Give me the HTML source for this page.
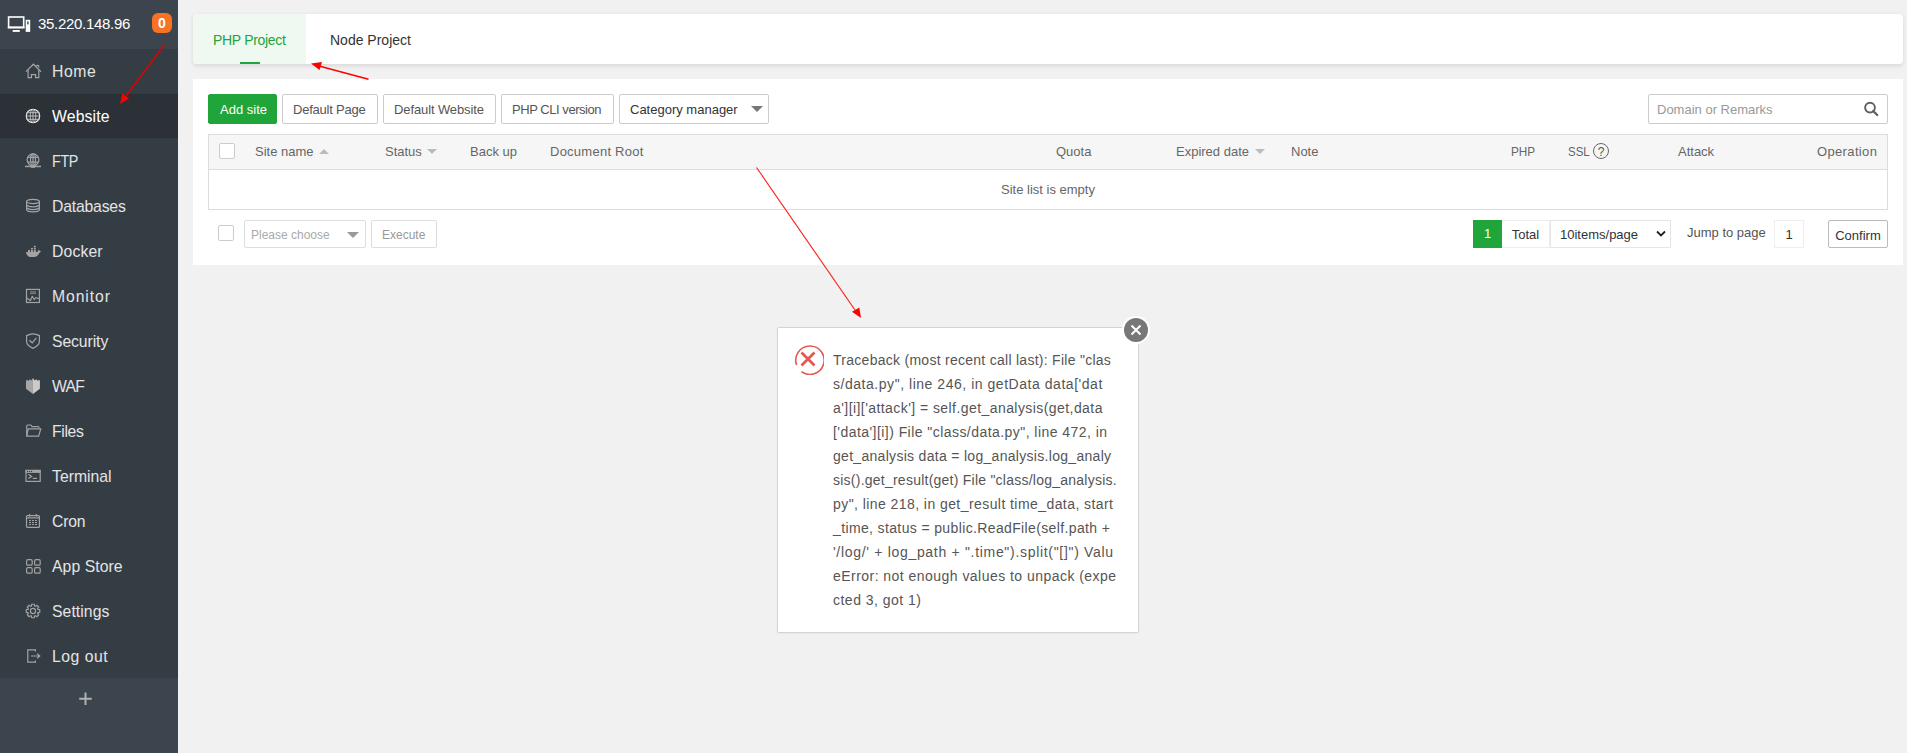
<!DOCTYPE html>
<html><head><meta charset="utf-8">
<style>
*{margin:0;padding:0;box-sizing:border-box}
html,body{width:1907px;height:753px;overflow:hidden;background:#f1f1f1;font-family:"Liberation Sans",sans-serif;position:relative}
.abs{position:absolute}
#side{position:absolute;left:0;top:0;width:178px;height:753px;background:#3c444d}
#side .ip{position:absolute;left:38px;top:15px;font-size:15px;color:#fff;letter-spacing:-0.3px;line-height:18px}
#side .badge{position:absolute;left:152px;top:13px;width:20px;height:20px;border-radius:6px;background:#f97224;color:#fff;font-size:14px;font-weight:bold;text-align:center;line-height:21px}
#menu{position:absolute;left:0;top:49px;width:178px;height:630px;background:#353d44}
#menu .it{position:absolute;left:0;width:178px;height:45px}
#menu .it.cur{background:#2c3138}
#menu .it span{position:absolute;left:52px;top:13.5px;font-size:15.75px;line-height:18px;color:#e4e4e4}
#menu .it.cur span{color:#fff}
#menu .it svg{position:absolute;left:25px;top:14px;width:18px;height:18px;overflow:visible}
#menu svg .s{fill:none;stroke:#a3a3a3;stroke-width:1.2}
#menu svg .f{fill:#a3a3a3}
#addm{position:absolute;left:0;top:678px;width:178px;height:74px;background:#3c444d}
.card{position:absolute;background:#fff}
.t13{font-size:13px;line-height:15px;white-space:nowrap}
.btn{position:absolute;top:94px;height:30px;border:1px solid #ccc;border-radius:2px;background:#fff;color:#555;font-size:13px;line-height:30px;white-space:nowrap;padding-left:10px}
.th{position:absolute;top:144px;font-size:13px;line-height:15px;color:#666;white-space:nowrap}
.chk{position:absolute;width:16px;height:16px;border:1px solid #ccc;border-radius:2px;background:#fff}
.tri-d{position:absolute;width:0;height:0;border-left:5px solid transparent;border-right:5px solid transparent;border-top:5px solid #bbb}
.tri-u{position:absolute;width:0;height:0;border-left:5px solid transparent;border-right:5px solid transparent;border-bottom:5px solid #bbb}
.dl{position:absolute;left:55px;font-size:14px;line-height:24px;color:#555;white-space:nowrap}
</style></head><body>
<div id="side">
  <svg class="abs" style="left:7px;top:15px" width="24" height="18" viewBox="0 0 24 18"><rect x="1.6" y="2" width="15.1" height="10.4" fill="none" stroke="#fff" stroke-width="1.6"/><rect x="0.8" y="11.6" width="16.7" height="1.8" fill="#fff"/><rect x="5.7" y="15" width="7.1" height="1.9" fill="#fff"/><rect x="18.7" y="4.8" width="4.5" height="12.1" fill="#fff"/><rect x="20.2" y="6.4" width="1.4" height="3" fill="#3c444d"/></svg>
  <div class="ip">35.220.148.96</div>
  <div class="badge">0</div>
  <div id="menu">
    <div class="it" style="top:0"><svg viewBox="0 0 18 18"><path class="s" stroke-width="1.1" d="M0.9 8.6 L8.45 1.2 L16 8.7"/><path class="s" stroke-width="1.1" d="M3.1 7 V14.6 H6.4 V11.6 H10.6 V14.6 H13.8 V7"/><path class="s" stroke-width="1" d="M11.4 2.9 a1.3 1.3 0 1 1 2.2 1.6"/></svg><span style="letter-spacing:0.55px">Home</span></div>
    <div class="it cur" style="top:45px;height:44px"><svg viewBox="0 0 18 18"><circle cx="8" cy="8" r="6.7" fill="none" stroke="#e6e6e6" stroke-width="1.2"/><ellipse cx="8" cy="8" rx="2.8" ry="6.7" fill="none" stroke="#c8c8c8" stroke-width="0.9"/><path fill="none" stroke="#c8c8c8" stroke-width="0.9" d="M8 1.3 V14.7 M1.6 4.7 H14.4 M1.3 8 H14.7 M1.6 11.3 H14.4"/></svg><span style="letter-spacing:0.15px">Website</span></div>
    <div class="it" style="top:90px"><svg viewBox="0 0 18 18"><circle class="s" cx="8" cy="6.8" r="5.9" stroke-width="1.1"/><ellipse class="s" cx="8" cy="6.8" rx="2.5" ry="5.9" stroke-width="1"/><path class="s" d="M8 1 V12.6 M2.6 4.4 H13.4 M2.6 9.2 H13.4" stroke-width="1"/><rect class="f" x="0" y="12.7" width="16" height="1.5"/><rect class="f" x="6" y="12" width="4" height="2.8"/></svg><span style="letter-spacing:-0.4px;transform:scaleX(0.91);transform-origin:0 0">FTP</span></div>
    <div class="it" style="top:135px"><svg viewBox="0 0 18 18"><path class="s" d="M1.6 3.5 C1.6 0.6 14.4 0.6 14.4 3.5 V11.5 C14.4 14.6 1.6 14.6 1.6 11.5 Z"/><path class="s" d="M1.6 3.5 C1.6 6.2 14.4 6.2 14.4 3.5 M2.2 7 C3 9.4 13 9.4 13.8 7 M2.2 9.8 C3 12.2 13 12.2 13.8 9.8"/></svg><span style="letter-spacing:-0.19px">Databases</span></div>
    <div class="it" style="top:180px"><svg viewBox="0 0 18 18"><path class="f" d="M1 9.1 H12.4 L13.1 7.7 L13.9 6.5 L14.6 7.7 L16.1 8.4 L14.7 9.5 C13.5 11.8 11.6 14 9 14 H4.6 C2.6 13.2 1.3 11.6 1 9.1 Z"/><rect class="f" x="3" y="7" width="2" height="2.2"/><rect class="f" x="5.9" y="7" width="2" height="2.2"/><rect class="f" x="8.8" y="7" width="2" height="2.2"/><rect class="f" x="5.9" y="4.9" width="2" height="1.5"/><rect class="f" x="8.8" y="4.9" width="2" height="1.5"/><rect class="f" x="8.8" y="2.8" width="2" height="1.5"/></svg><span style="letter-spacing:0.14px">Docker</span></div>
    <div class="it" style="top:225px"><svg viewBox="0 0 18 18"><rect class="s" x="1.5" y="1.4" width="12.9" height="13.1" stroke-width="1.1"/><rect class="f" x="5" y="3.4" width="6" height="0.9" opacity=".85"/><rect class="f" x="5" y="4.9" width="6" height="0.9" opacity=".85"/><path class="s" stroke-width="1" stroke-linejoin="round" d="M1.8 9.9 L5.3 12.7 L7.35 8.3 L9.3 11.5 L10.9 9.5 L12.5 10.3 L14.2 10.5"/></svg><span style="letter-spacing:0.9px">Monitor</span></div>
    <div class="it" style="top:270px"><svg viewBox="0 0 18 18"><path class="s" d="M8 0.8 C5.8 0.8 3.6 1.6 1.6 2.6 V8.6 C1.6 11.6 4.4 13.8 8 15.4 C11.6 13.8 14.4 11.6 14.4 8.6 V2.6 C12.4 1.6 10.2 0.8 8 0.8 Z"/><path class="s" d="M4.4 7.2 L7.2 9.8 L11.4 4.8" stroke-width="1.3"/></svg><span style="letter-spacing:-0.09px">Security</span></div>
    <div class="it" style="top:315px"><svg viewBox="0 0 18 18"><path fill="#a6a6a6" d="M1 2.4 L2.4 1.9 L3.6 3 L4.8 1.3 L6.5 2.6 L7.95 0 V16.1 L1 10.7 Z"/><path fill="#cbcbcb" d="M7.95 0 L9.7 2.4 L11.3 1.3 L12.5 2.8 L14.1 2.1 L14.9 2.6 V10.7 L7.95 16.1 Z"/></svg><span style="letter-spacing:-0.75px">WAF</span></div>
    <div class="it" style="top:360px"><svg viewBox="0 0 18 18"><path class="s" d="M1.7 13.2 V3.2 C1.7 2.5 2.2 2 2.8 2 H5.8 L7 3.6 H13.2 C13.8 3.6 14.2 4 14.2 4.8"/><path class="s" d="M1.7 13.2 L3.2 5.9 H15.8 L13.6 13.2 Z"/></svg><span style="letter-spacing:-0.35px">Files</span></div>
    <div class="it" style="top:405px"><svg viewBox="0 0 18 18"><rect class="s" x="1" y="2.4" width="14.2" height="11"/><rect class="f" x="0.6" y="1.9" width="15" height="3"/><circle cx="2.6" cy="3.4" r="0.65" fill="#353d44"/><circle cx="4.6" cy="3.4" r="0.65" fill="#353d44"/><circle cx="6.6" cy="3.4" r="0.65" fill="#353d44"/><path class="s" d="M3.4 6.3 L6.6 8.4 L3.4 10.5" stroke-width="1.3"/><rect class="f" x="7.7" y="9.8" width="4.2" height="1.2"/></svg><span style="letter-spacing:0.01px">Terminal</span></div>
    <div class="it" style="top:450px"><svg viewBox="0 0 18 18"><rect class="s" x="1.5" y="2.6" width="12.9" height="11.8" rx="1" stroke-width="1.1"/><path class="s" stroke-width="1.1" d="M1.6 4.9 H14.4"/><path class="s" stroke-width="1.4" d="M4.6 1 V3.6 M11.3 1 V3.6"/><path class="f" d="M4.00 6.90 h2 v1 h-2z M7.00 6.90 h2 v1 h-2z M10.00 6.90 h2 v1 h-2z M4.00 8.90 h2 v1 h-2z M7.00 8.90 h2 v1 h-2z M10.00 8.90 h2 v1 h-2z M4.00 11.00 h2 v1 h-2z M7.00 11.00 h2 v1 h-2z M10.00 11.00 h2 v1 h-2z"/></svg><span style="letter-spacing:-0.17px">Cron</span></div>
    <div class="it" style="top:495px"><svg viewBox="0 0 18 18"><rect class="s" x="1.6" y="1.6" width="5.6" height="5.6" rx="1.3"/><rect class="s" x="9.6" y="1.6" width="5.6" height="5.6" rx="1.3"/><rect class="s" x="1.6" y="9.6" width="5.6" height="5.6" rx="1.3"/><rect class="s" x="9.6" y="9.6" width="5.6" height="5.6" rx="1.3"/></svg><span style="letter-spacing:0.07px">App Store</span></div>
    <div class="it" style="top:540px"><svg viewBox="0 0 18 18"><path class="s" stroke-width="1.05" stroke-linejoin="round" d="M6.68 1.23 L9.32 1.23 L9.61 3.05 L10.36 3.37 L11.86 2.28 L13.72 4.14 L12.63 5.64 L12.95 6.39 L14.77 6.68 L14.77 9.32 L12.95 9.61 L12.63 10.36 L13.72 11.86 L11.86 13.72 L10.36 12.63 L9.61 12.95 L9.32 14.77 L6.68 14.77 L6.39 12.95 L5.64 12.63 L4.14 13.72 L2.28 11.86 L3.37 10.36 L3.05 9.61 L1.23 9.32 L1.23 6.68 L3.05 6.39 L3.37 5.64 L2.28 4.14 L4.14 2.28 L5.64 3.37 L6.39 3.05 Z"/><circle class="s" cx="8" cy="8" r="2.6" stroke-width="1.05"/></svg><span style="letter-spacing:0.06px">Settings</span></div>
    <div class="it" style="top:585px"><svg viewBox="0 0 18 18"><path class="s" d="M10.4 3.6 V1.8 H2.8 V14.2 H10.4 V12.4"/><path class="s" d="M6 8 H14.8 M12.2 5.6 L14.8 8 L12.2 10.4" stroke-width="1.3"/></svg><span style="letter-spacing:0.5px">Log out</span></div>
  </div>
  <div id="addm"><svg class="abs" style="left:79px;top:14px" width="13" height="14" viewBox="0 0 13 14"><path d="M6.5 0.5 V13 M0.2 6.8 H12.8" stroke="#b0b0b0" stroke-width="2"/></svg></div>
</div>

<!-- tab card -->
<div class="card" style="left:193px;top:14px;width:1710px;height:50px;border-radius:4px;box-shadow:0 1.5px 4px rgba(0,0,0,.1)">
  <div class="abs" style="left:0;top:0;width:113px;height:50px;background:#f0f9f1;border-radius:4px 0 0 4px"></div>
  <div class="abs" style="left:20px;top:18px;font-size:14px;line-height:16px;color:#20a53a;letter-spacing:-0.32px">PHP Project</div>
  <div class="abs" style="left:47px;top:48px;width:20px;height:2px;background:#20a53a"></div>
  <div class="abs" style="left:137px;top:18px;font-size:14px;line-height:16px;color:#333">Node Project</div>
</div>

<!-- main card -->
<div class="card" style="left:193px;top:79px;width:1710px;height:186px"></div>

<!-- toolbar -->
<div class="btn" style="left:208px;width:69px;background:#20a53a;border-color:#20a53a;color:#fff;padding-left:11px">Add site</div>
<div class="btn" style="left:282px;width:96px;letter-spacing:-0.23px">Default Page</div>
<div class="btn" style="left:383px;width:113px;letter-spacing:-0.11px">Default Website</div>
<div class="btn" style="left:501px;width:113px;letter-spacing:-0.45px">PHP CLI version</div>
<div class="btn" style="left:619px;width:150px;color:#333">Category manager<div class="abs" style="left:130.5px;top:11px;width:0;height:0;border-left:6px solid transparent;border-right:6px solid transparent;border-top:6px solid #777"></div></div>

<!-- search -->
<div class="abs" style="left:1648px;top:94px;width:240px;height:30px;border:1px solid #ccc;border-radius:2px;background:#fff"></div>
<div class="abs t13" style="left:1657px;top:102px;color:#999">Domain or Remarks</div>
<svg class="abs" style="left:1863px;top:101px" width="16" height="16" viewBox="0 0 16 16"><circle cx="7" cy="6.6" r="4.9" fill="none" stroke="#606060" stroke-width="1.9"/><path d="M10.2 10 L14.2 14" stroke="#606060" stroke-width="2.3" stroke-linecap="round"/></svg>

<!-- table -->
<div class="abs" style="left:208px;top:134px;width:1680px;height:76px;border:1px solid #ddd;background:#fff"></div>
<div class="abs" style="left:209px;top:135px;width:1678px;height:35px;background:#f6f6f6;border-bottom:1px solid #ddd"></div>
<div class="chk" style="left:219px;top:143px"></div>
<div class="th" style="left:255px">Site name</div><div class="tri-u" style="left:319px;top:149px"></div>
<div class="th" style="left:385px">Status</div><div class="tri-d" style="left:427px;top:149px"></div>
<div class="th" style="left:470px">Back up</div>
<div class="th" style="left:550px;letter-spacing:0.25px">Document Root</div>
<div class="th" style="left:1056px">Quota</div>
<div class="th" style="left:1176px">Expired date</div><div class="tri-d" style="left:1255px;top:149px"></div>
<div class="th" style="left:1291px">Note</div>
<div class="th" style="left:1511px;transform:scaleX(0.905);transform-origin:0 0">PHP</div>
<div class="th" style="left:1568px;transform:scaleX(0.885);transform-origin:0 0">SSL</div>
<div class="abs" style="left:1593px;top:143px;width:16px;height:16px;border:1px solid #666;border-radius:50%;font-size:12px;line-height:16px;text-align:center;color:#555">?</div>
<div class="th" style="left:1678px">Attack</div>
<div class="th" style="left:1817px;letter-spacing:0.35px">Operation</div>
<div class="abs t13" style="left:1001px;top:182px;color:#666">Site list is empty</div>

<!-- footer -->
<div class="chk" style="left:218px;top:225px"></div>
<div class="abs" style="left:244px;top:220px;width:122px;height:28px;border:1px solid #ddd;border-radius:2px;background:#fff"></div>
<div class="abs t13" style="left:251px;top:228px;color:#aaa;font-size:12px">Please choose</div>
<div class="abs" style="left:347px;top:232px;width:0;height:0;border-left:6px solid transparent;border-right:6px solid transparent;border-top:6px solid #999"></div>
<div class="abs" style="left:371px;top:220px;width:66px;height:28px;border:1px solid #ddd;border-radius:2px;background:#fff"></div>
<div class="abs t13" style="left:382px;top:228px;color:#999;font-size:12px">Execute</div>

<!-- pagination -->
<div class="abs" style="left:1473px;top:220px;width:29px;height:28px;background:#20a53a;color:#fff;font-size:13px;line-height:28px;text-align:center">1</div>
<div class="abs" style="left:1502px;top:220px;width:48px;height:28px;border:1px solid #eee;border-left:none;color:#333;font-size:13px;line-height:28px;text-align:center">Total</div>
<div class="abs" style="left:1550px;top:220px;width:121px;height:28px;border:1px solid #e6e6e6;color:#333;font-size:13px;line-height:28px;padding-left:9px">10items/page</div>
<svg class="abs" style="left:1656px;top:230px" width="10" height="8" viewBox="0 0 10 8"><path d="M1 1.5 L5 5.5 L9 1.5" fill="none" stroke="#222" stroke-width="1.8"/></svg>
<div class="abs t13" style="left:1687px;top:225px;color:#555">Jump to page</div>
<div class="abs" style="left:1774px;top:220px;width:30px;height:28px;border:1px solid #eee;color:#333;font-size:13px;line-height:28px;text-align:center">1</div>
<div class="abs" style="left:1828px;top:220px;width:60px;height:28px;border:1px solid #bbb;border-radius:2px;color:#333;font-size:13px;line-height:29px;text-align:center">Confirm</div>

<!-- dialog -->
<div class="abs" style="left:777px;top:327px;width:362px;height:306px;background:#fff;border:1px solid #d4d4d4;border-radius:2px;box-shadow:0 1px 2px rgba(0,0,0,.04)">
  <svg class="abs" style="left:14px;top:15px" width="32" height="32" viewBox="0 0 32 32"><path d="M4.6 22 A14.2 14.2 0 1 1 9.5 28.6" fill="none" stroke="#e4594f" stroke-width="1.6"/><path d="M9.5 9.5 L22.5 22.5 M22.5 9.5 L9.5 22.5" stroke="#e4594f" stroke-width="2.8"/></svg>
  <div class="dl" style="top:20px;letter-spacing:0.273px">Traceback (most recent call last): File "clas</div>
  <div class="dl" style="top:44px;letter-spacing:0.535px">s/data.py", line 246, in getData data['dat</div>
  <div class="dl" style="top:68px;letter-spacing:0.432px">a'][i]['attack'] = self.get_analysis(get,data</div>
  <div class="dl" style="top:92px;letter-spacing:0.447px">['data'][i]) File "class/data.py", line 472, in</div>
  <div class="dl" style="top:116px;letter-spacing:0.299px">get_analysis data = log_analysis.log_analy</div>
  <div class="dl" style="top:140px;letter-spacing:0.240px">sis().get_result(get) File "class/log_analysis.</div>
  <div class="dl" style="top:164px;letter-spacing:0.432px">py", line 218, in get_result time_data, start</div>
  <div class="dl" style="top:188px;letter-spacing:0.368px">_time, status = public.ReadFile(self.path +</div>
  <div class="dl" style="top:212px;letter-spacing:0.690px">'/log/' + log_path + ".time").split("[]") Valu</div>
  <div class="dl" style="top:236px;letter-spacing:0.461px">eError: not enough values to unpack (expe</div>
  <div class="dl" style="top:260px;letter-spacing:0.485px">cted 3, got 1)</div>
</div>
<div class="abs" style="left:1122px;top:316px;width:28px;height:28px;border-radius:50%;background:#fff"></div>
<div class="abs" style="left:1124px;top:318px;width:24px;height:24px;border-radius:50%;background:#777"></div>
<svg class="abs" style="left:1124px;top:318px" width="24" height="24" viewBox="0 0 24 24"><path d="M7.5 7.5 L16.5 16.5 M16.5 7.5 L7.5 16.5" stroke="#fff" stroke-width="2"/></svg>

<!-- annotation arrows -->
<svg class="abs" style="left:0;top:0" width="1907" height="753" viewBox="0 0 1907 753">
  <g stroke="#e00000" stroke-width="1.45" fill="#f00">
    <line x1="164.5" y1="44.5" x2="126" y2="96"/>
  </g>
  <path d="M120 104 L122.3 93.5 L129 98.6 Z" fill="#f00"/>
  <line x1="368.5" y1="79.2" x2="319" y2="66" stroke="#f00" stroke-width="1.5"/>
  <path d="M311 63.5 L322 62 L319.5 70 Z" fill="#f00"/>
  <line x1="756.5" y1="167.5" x2="855" y2="310" stroke="#f22" stroke-width="1.15"/>
  <path d="M861 318 L852 311.7 L859.3 307.6 Z" fill="#f00"/>
</svg>
</body></html>
